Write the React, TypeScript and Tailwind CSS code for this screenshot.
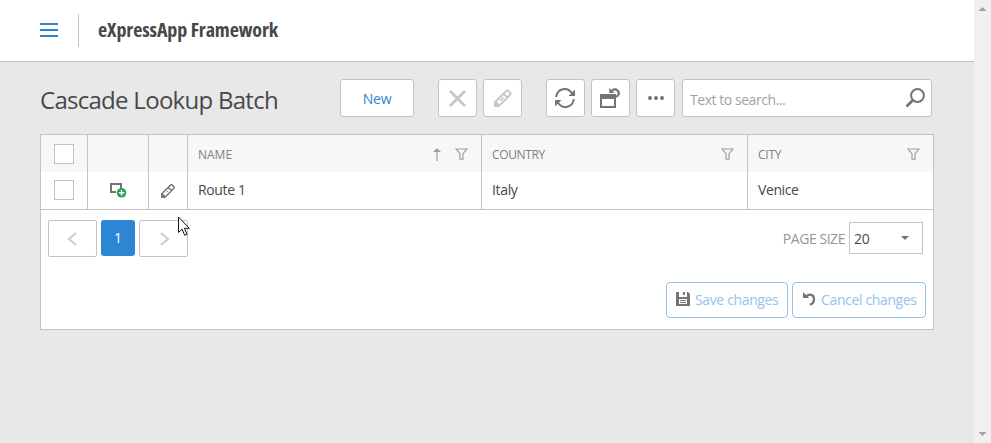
import React from 'react';

function Pencil({ className, size = 18 }: { className: string; size?: number }) {
  return (
    <svg className={className} width={size} height={size} viewBox="0 0 18 18" fill="none" stroke="currentColor" strokeWidth="1.9">
      <path d="M1.2 13 L12.6 1.6 Q13.3 .9 14 1.6 L16.4 4 Q17.1 4.7 16.4 5.4 L5 16.8 M9.6 4.8 L13.2 8.4 M9.4 8.6 L6.4 11.6" />
      <path d="M0 18 V12.4 L2 12 L6 16 L5.6 18 Z" fill="currentColor" stroke="none" />
    </svg>
  );
}

function SmallPencil() {
  return (
    <svg className="ml-0.5" width="14" height="14" viewBox="0 0 14 14" fill="none" stroke="#747474" strokeWidth="1.4">
      <path d="M.8 9.8 L9.7 .9 Q10.3 .5 10.9 .9 L13 3 Q13.5 3.6 13 4.2 L4.2 13 M7.4 3.4 L10.5 6.5" />
      <path d="M7.3 6.6L5.6 8.3" strokeWidth="1" />
      <path d="M0 14V9.6L1.2 9L5 12.8L4.4 14Z" fill="#747474" stroke="none" />
    </svg>
  );
}

function Funnel() {
  return (
    <svg className="shrink-0 text-[#a0a0a0]" width="13" height="12" viewBox="0 0 13 12" fill="none" stroke="currentColor" strokeWidth="1.2">
      <path d="M1 1 H12 L8 5.6 V11.2 H5 V5.6 Z" />
    </svg>
  );
}

function Tool({ children, className = '' }: { children: React.ReactNode; className?: string }) {
  return (
    <button className={`flex h-[38px] w-[39px] shrink-0 items-center justify-center rounded-[3px] border border-[#c3c3c3] bg-white text-[#747474] ${className}`}>
      {children}
    </button>
  );
}

function Check({ className = '' }: { className?: string }) {
  return <span className={`block size-5 border border-[#c3c3c3] bg-white ${className}`} />;
}

const head = 'flex items-center border-r border-[#c3c3c3] bg-[#f7f7f7] pl-[10px] text-[12px] text-[#808080]';
const cell = 'flex items-center border-r border-[#c3c3c3] pl-[10px] text-[14px] text-[#484848]';

export default function App() {
  return (
    <div className="flex h-[443px] w-[991px] overflow-hidden bg-[#e8e8e8] font-['Open_Sans','Noto_Sans',sans-serif] text-[#484848]">
      <div className="w-[974px] shrink-0">
        <header className="flex h-[62px] items-center border-b border-[#c3c3c3] bg-white pl-10">
          <svg className="mb-px" width="18" height="14" viewBox="0 0 18 14" fill="#2d86d3" shapeRendering="crispEdges">
            <path d="M0 0h18v2H0zM0 6h18v2H0zM0 12h18v2H0z" />
          </svg>
          <span className="ml-5 h-[33px] w-px bg-[#c3c3c3]" />
          <span className="mb-0.5 ml-[19px] whitespace-nowrap text-[20px] font-bold leading-6 tracking-[-0.1px] [font-stretch:75%]">eXpressApp Framework</span>
        </header>

        <div className="mt-[17px] flex h-[38px] items-center pl-10">
          <h1 className="w-[300px] shrink-0 whitespace-nowrap pt-[3px] text-[24px] leading-8 tracking-[-0.72px]">Cascade Lookup Batch</h1>
          <button className="h-[38px] w-[74px] shrink-0 rounded-[3px] border border-[#c3c3c3] bg-white pt-px text-[14px] tracking-[-0.2px] text-[#2d86d3]">New</button>
          <Tool className="ml-6">
            <svg width="17" height="17" viewBox="0 0 17 17" fill="none" stroke="#c6c6c6" strokeWidth="2.8"><path d="M1 1L16 16M16 1L1 16" /></svg>
          </Tool>
          <Tool className="ml-1.5"><Pencil className="text-[#c6c6c6]" /></Tool>
          <Tool className="ml-6">
            <svg className="mr-px" width="20" height="20" viewBox="0 0 20 20" fill="none" stroke="currentColor" strokeWidth="2">
              <path d="M1.2 9C2.2 .5 12-1.7 16.8 5M18.8 11C17.8 19.5 8 21.7 3.2 15" />
              <path d="M20 1.5V8H13.5ZM0 18.5V12H6.5Z" fill="currentColor" stroke="none" />
            </svg>
          </Tool>
          <Tool className="ml-1.5">
            <svg className="mr-px" width="20" height="20" viewBox="0 0 20 20">
              <path d="M0 6H16V20H0ZM2 11V18H14V11Z" fill="currentColor" fillRule="evenodd" />
              <path d="M12 2.6C16 -.4 20.4 3.6 18 7.2Q17.4 8.2 16 8.8" fill="none" stroke="currentColor" strokeWidth="2.2" />
              <path d="M9.3 0V5H14.6Z" fill="currentColor" />
            </svg>
          </Tool>
          <Tool className="ml-1.5">
            <svg className="ml-px" width="16" height="4" viewBox="0 0 16 4" fill="currentColor"><circle cx="2" cy="2" r="2" /><circle cx="8" cy="2" r="2" /><circle cx="14" cy="2" r="2" /></svg>
          </Tool>
          <div className="ml-[7px] flex h-[38px] w-[250px] shrink-0 items-center justify-between rounded-[3px] border border-[#c3c3c3] bg-white pl-[7px] pr-1.5">
            <span className="pt-0.5 text-[14px] tracking-[-0.45px] text-[#a2a2a2]">Text to search...</span>
            <svg width="20" height="20" viewBox="0 0 20 20" fill="none" stroke="#747474" strokeWidth="2"><circle cx="12.5" cy="7.5" r="6.4" /><path d="M8 12L1.5 18.5" strokeWidth="2.8" /></svg>
          </div>
        </div>

        <main className="ml-10 mt-[17px] h-[196px] w-[894px] border border-[#c3c3c3] bg-white">
          <div className="grid h-[75px] grid-cols-[47px_61px_39px_294px_266px_185px] grid-rows-[37px_37px] border-b border-[#c3c3c3]">
            <div className={head + ' !pl-[13px]'}><Check /></div>
            <div className={head} />
            <div className={head} />
            <div className={head + ' pr-[13px]'}>
              <span className="flex-1 pt-[3px]">NAME</span>
              <svg className="mr-[14px] mt-px" width="8" height="13" viewBox="0 0 8 13" fill="#a0a0a0"><path d="M4 0L8 4H4.6V13H3.4V4H0Z" /></svg>
              <Funnel />
            </div>
            <div className={head + ' pr-[13px]'}><span className="flex-1 pt-[3px] tracking-[-0.35px]">COUNTRY</span><Funnel /></div>
            <div className={head + ' border-r-0 pr-[13px]'}><span className="flex-1 pt-[3px] tracking-[-0.25px]">CITY</span><Funnel /></div>
            <div className={cell + ' !pl-[13px]'}><Check className="mb-0.5" /></div>
            <div className={cell + ' !pl-[22px]'}>
              <svg width="17" height="15" viewBox="0 0 17 15">
                <path d="M6 9H1V1H11V5" fill="none" stroke="#747474" strokeWidth="2" />
                <circle cx="11.5" cy="9.8" r="4.8" fill="#28a052" /><path d="M11.5 7V12.6M8.7 9.8H14.3" stroke="white" strokeWidth="1.4" />
              </svg>
            </div>
            <div className={cell}><SmallPencil /></div>
            <div className={cell + ' pb-0.5 tracking-[-0.35px]'}>Route 1</div>
            <div className={cell + ' pb-0.5 tracking-[-0.35px]'}>Italy</div>
            <div className={cell + ' border-r-0 pb-0.5 tracking-[-0.4px]'}>Venice</div>
          </div>

          <div className="flex items-start pl-[7px] pr-[10px] pt-[10px]">
            <div className="relative flex gap-1">
              <button className="flex h-[37px] w-[49px] items-center justify-center rounded-[2px] border border-[#c3c3c3]">
                <svg className="mr-0.5" width="10" height="14" viewBox="0 0 10 14" fill="none" stroke="#cfcfcf" strokeWidth="2.2"><path d="M9 1L2 7L9 13" /></svg>
              </button>
              <button className="h-9 w-[34px] rounded-[3px] bg-[#2d86d3] pb-px text-[14px] text-white">1</button>
              <button className="flex h-[37px] w-[49px] items-center justify-center rounded-[2px] border border-[#c3c3c3]">
                <svg className="ml-0.5" width="10" height="14" viewBox="0 0 10 14" fill="none" stroke="#cfcfcf" strokeWidth="2.2"><path d="M1 1L8 7L1 13" /></svg>
              </button>
              <svg className="absolute left-[130px] top-[-4px]" width="13" height="21" viewBox="0 0 13 21"><path d="M.5 1V16.5L4 13L6.7 19.3L9 18.2L6.4 12.3H11.3Z" fill="white" stroke="#151525" /></svg>
            </div>
            <div className="ml-auto mt-0.5 flex items-center">
              <span className="mr-1 whitespace-nowrap pt-px text-[14px] tracking-[-0.45px] text-[#969696]">PAGE SIZE</span>
              <div className="flex h-8 w-[74px] items-center justify-between border border-[#c3c3c3] pl-1 pr-[13px] pt-px text-[14px] tracking-[-0.3px]">20
                <svg className="mb-0.5" width="8" height="4" viewBox="0 0 8 4" fill="#747474"><path d="M0 0H8L4 4Z" /></svg>
              </div>
            </div>
          </div>

          <div className="mt-[25px] flex justify-end gap-1 pr-[7px] text-[14px] text-[#96c2e9]">
            <button className="flex h-9 w-[122px] items-center whitespace-nowrap rounded-[4px] border border-[#96c2e9] pb-0.5 pl-[9px]">
              <svg className="mr-[5px] shrink-0" width="14" height="14" viewBox="0 0 14 14"><path d="M0 0H3V5H11V0H12L14 2V14H0ZM7 0H9V3H7Z" fill="#747474" /><path d="M3 7H11V12H3Z" fill="white" /><path d="M4 8H10V9H4ZM4 10H10V11H4Z" fill="#747474" /></svg>
              <span className="tracking-[-0.36px]">Save changes</span>
            </button>
            <button className="flex h-9 w-[134px] items-center whitespace-nowrap rounded-[4px] border border-[#96c2e9] pb-0.5 pl-[10px]">
              <svg className="mr-1.5 shrink-0" width="12" height="14" viewBox="0 0 12 14" fill="none"><path d="M3 4.5C7 1 11 3 11 7C11 9.5 9.5 12 7 12.7" stroke="#747474" strokeWidth="2.3" /><path d="M0 0V6H6Z" fill="#747474" /></svg>
              <span className="tracking-[-0.36px]">Cancel changes</span>
            </button>
          </div>
        </main>
      </div>
      <aside className="flex w-[17px] flex-col items-center justify-between bg-[#f0f0f0] pb-[7px] pt-[7px]">
        <svg width="7" height="4" viewBox="0 0 7 4" fill="#a3a3a3" shapeRendering="crispEdges"><path d="M3 0H4V1H5V2H6V3H7V4H0V3H1V2H2V1H3Z" /></svg>
        <svg width="7" height="4" viewBox="0 0 7 4" fill="#a3a3a3" shapeRendering="crispEdges"><path d="M0 0H7V1H6V2H5V3H4V4H3V3H2V2H1V1H0Z" /></svg>
      </aside>
    </div>
  );
}
